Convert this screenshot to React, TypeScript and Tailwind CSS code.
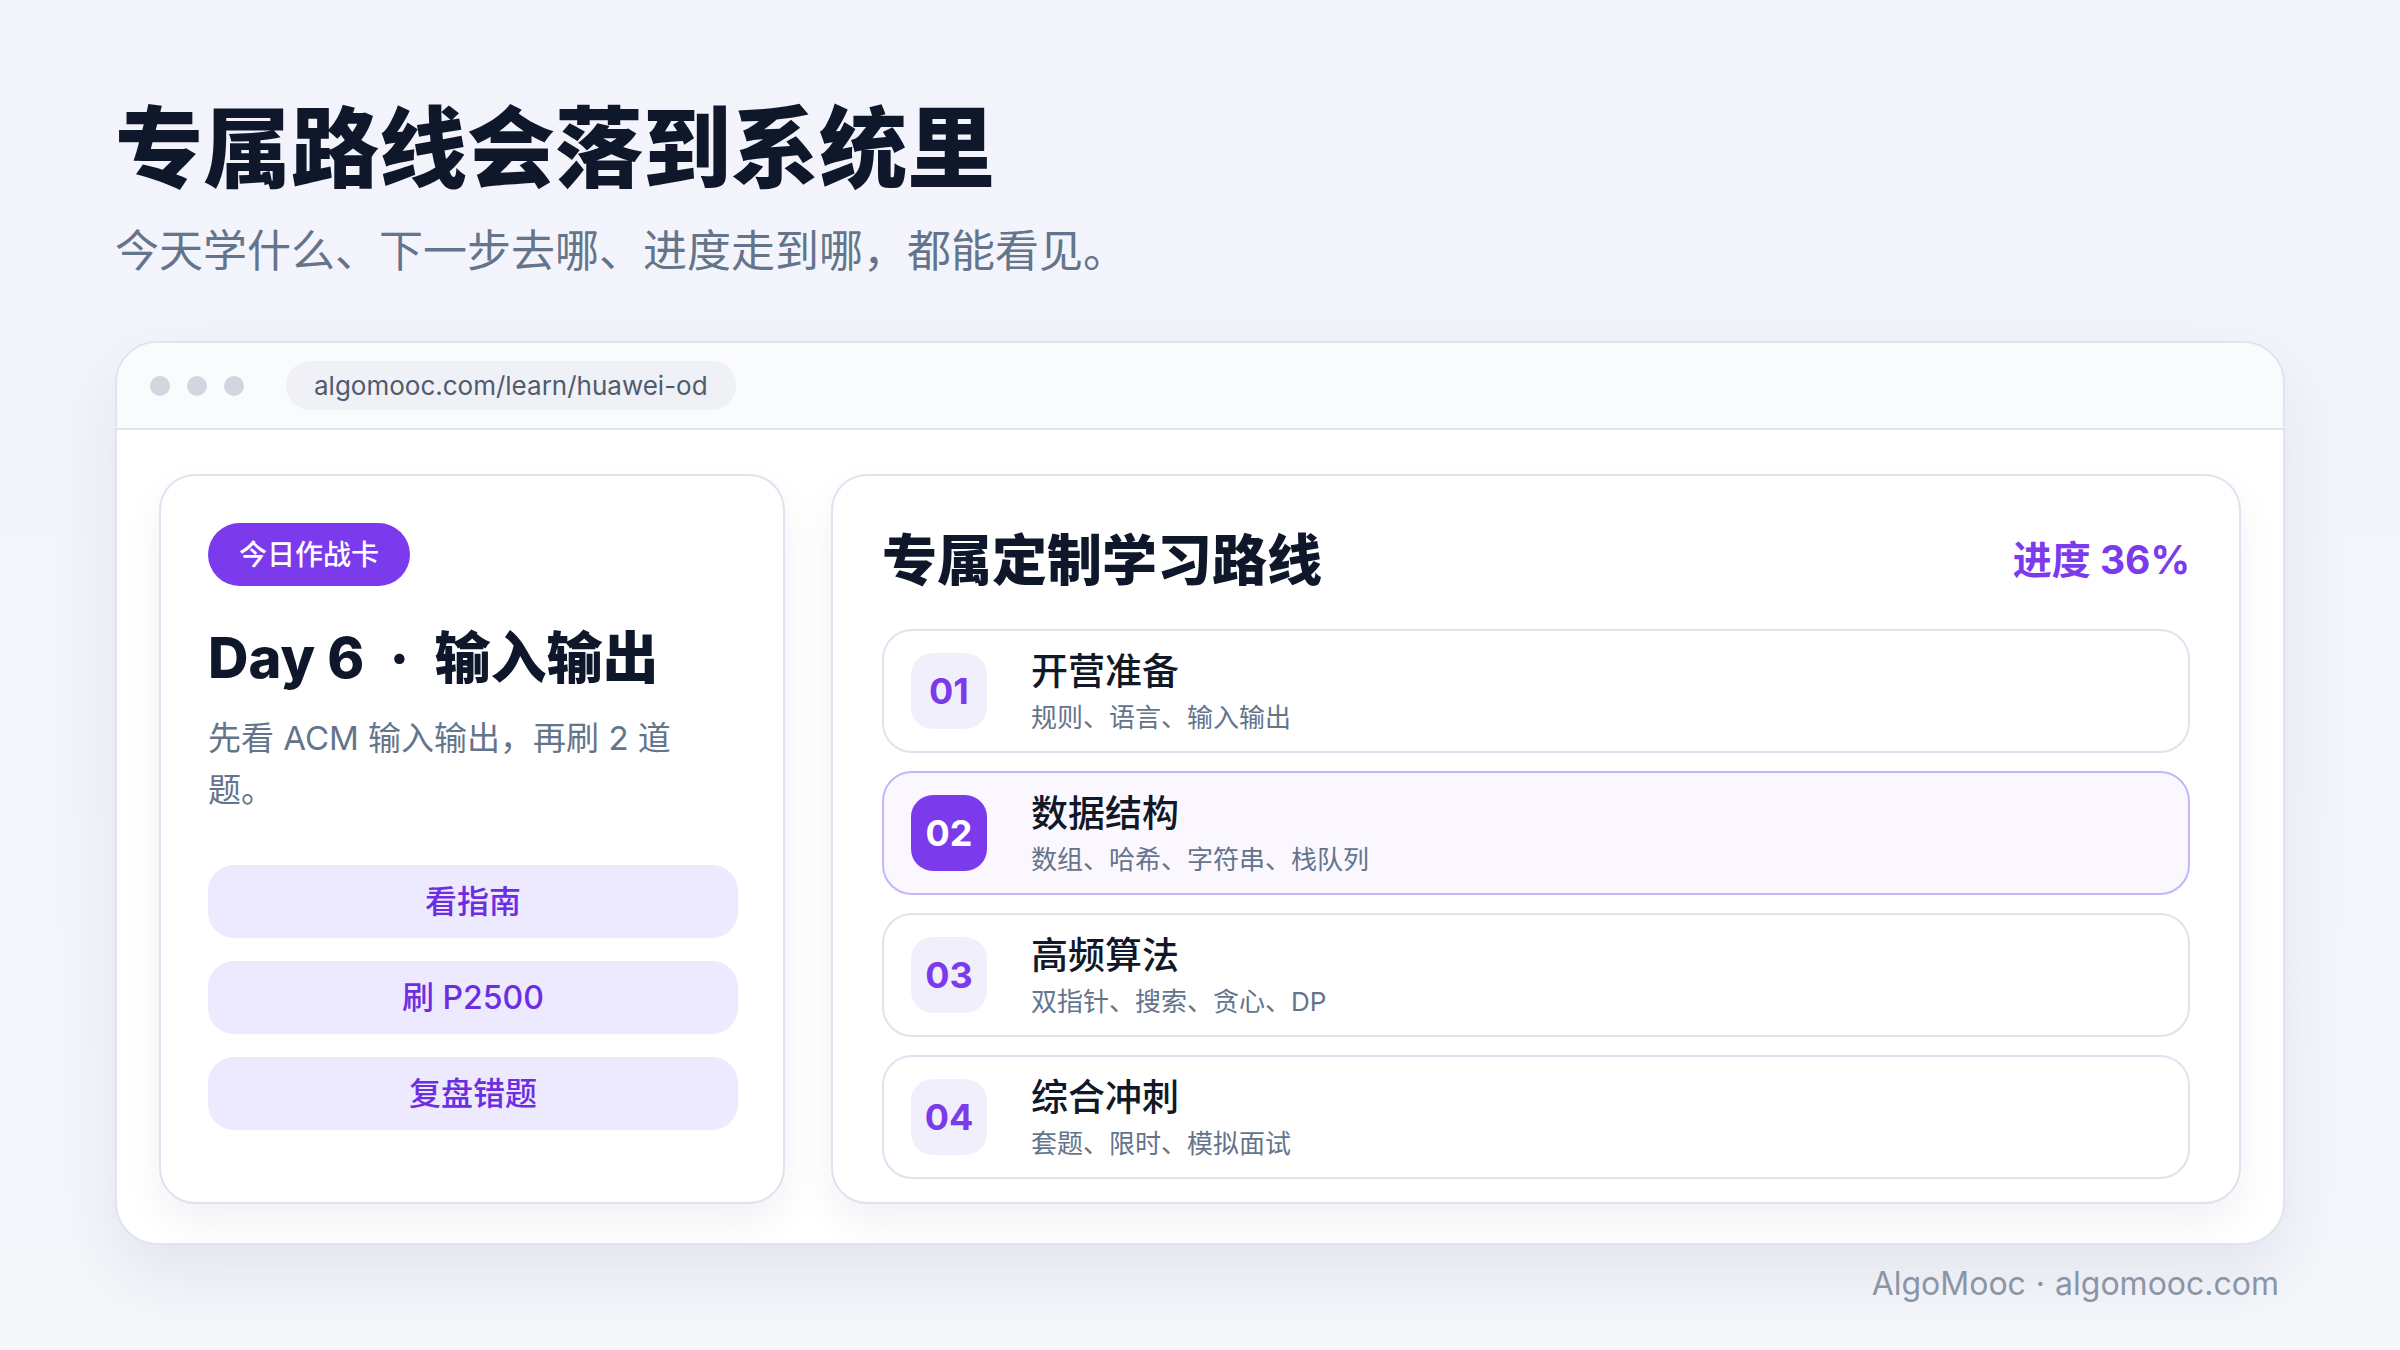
const routeItems = [
  { no: "01", title: "开营准备", desc: "规则、语言、输入输出", active: false },
  { no: "02", title: "数据结构", desc: "数组、哈希、字符串、栈队列", active: true },
  { no: "03", title: "高频算法", desc: "双指针、搜索、贪心、DP", active: false },
  { no: "04", title: "综合冲刺", desc: "套题、限时、模拟面试", active: false },
]

const actions = ["看指南", "刷 P2500", "复盘错题"]

export default function App() {
  return (
    <main className="h-[1350px] w-[2400px] overflow-hidden bg-[linear-gradient(180deg,#f3f4fb_0%,#f6f7fb_100%)] font-['Inter','Noto_Sans_CJK_SC',sans-serif]">
      <div className="pl-[115px] pt-[95px]">
        <h1 className="text-[88px] font-black leading-[106px] text-[#0f172a]">专属路线会落到系统里</h1>
        <p className="mt-[19px] text-[44px] leading-[62px] text-[#64748b]">今天学什么、下一步去哪、进度走到哪，都能看见。</p>

        <section className="mt-[59px] w-[2170px] overflow-hidden rounded-[42px] border-2 border-[#dfe4ef] bg-white shadow-[0_30px_70px_rgba(30,41,90,0.09)]">
          <div className="flex h-[87px] items-center border-b-2 border-[#dfe4ef] bg-[#fafbfd] pl-[33px]">
            <div className="flex gap-[17px]">
              <span className="h-[20px] w-[20px] rounded-full bg-[#d3d6de]" />
              <span className="h-[20px] w-[20px] rounded-full bg-[#d3d6de]" />
              <span className="h-[20px] w-[20px] rounded-full bg-[#d3d6de]" />
            </div>
            <div className="ml-[42px] flex h-[49px] items-center rounded-full bg-[#eff1f6] px-[28px] text-[26px] text-[#4f5b6e]">
              algomooc.com/learn/huawei-od
            </div>
          </div>

          <div className="grid grid-cols-[626px_1410px] gap-[46px] px-[42px] pb-[39px] pt-[44px]">
            <article className="rounded-[36px] border-2 border-[#dde3ef] bg-white px-[47px] pt-[47px] shadow-[0_18px_40px_rgba(30,41,90,0.06)]">
              <span className="inline-flex h-[63px] items-center rounded-full bg-[#7c3aed] px-[31px] text-[28px] font-medium text-white">今日作战卡</span>
              <h2 className="mt-[36px] text-[56px] font-extrabold leading-[72px] text-[#0f172a]">
                Day 6 <span className="mx-[13px]">·</span> 输入输出
              </h2>
              <p className="mt-[18px] w-[530px] text-[33px] leading-[52px] text-[#64748b]">先看 ACM 输入输出，再刷 2 道 题。</p>
              <div className="mt-[49px] flex flex-col gap-[23px]">
                {actions.map((label) => (
                  <button
                    key={label}
                    type="button"
                    className="h-[73px] w-[530px] rounded-[26px] bg-[#ede9fe] text-[32px] font-medium text-[#6d2de0]"
                  >
                    {label}
                  </button>
                ))}
              </div>
            </article>

            <article className="rounded-[36px] border-2 border-[#dde3ef] bg-white px-[49px] pb-[23px] pt-[46px] shadow-[0_18px_40px_rgba(30,41,90,0.06)]">
              <div className="flex h-[76px] items-center justify-between">
                <h2 className="text-[55px] font-black text-[#0f172a]">专属定制学习路线</h2>
                <span className="text-[39px] font-bold text-[#7c3aed]">进度 36%</span>
              </div>
              <div className="mt-[31px] flex flex-col gap-[18px]">
                {routeItems.map((item) => (
                  <div
                    key={item.no}
                    className={`flex h-[124px] items-center rounded-[30px] border-2 pl-[27px] ${item.active ? "border-[#c4b5fd] bg-[#faf7ff]" : "border-[#dde3ef] bg-white"}`}
                  >
                    <div
                      className={`flex h-[76px] w-[76px] items-center justify-center rounded-[22px] text-[36px] font-bold ${item.active ? "bg-[#7c3aed] text-white" : "bg-[#f1effb] text-[#7c3aed]"}`}
                    >
                      {item.no}
                    </div>
                    <div className="ml-[44px]">
                      <h3 className="text-[37px] font-medium leading-[50px] text-[#111827]">{item.title}</h3>
                      <p className="mt-[3px] text-[26px] leading-[36px] text-[#64748b]">{item.desc}</p>
                    </div>
                  </div>
                ))}
              </div>
            </article>
          </div>
        </section>

        <div className="flex w-[2170px] justify-end pr-[6px] pt-[15px]">
          <p className="text-[32px] leading-[48px] text-[#8b95a7]">
            AlgoMooc <span className="mx-[1px]">·</span> algomooc.com
          </p>
        </div>
      </div>
    </main>
  )
}
